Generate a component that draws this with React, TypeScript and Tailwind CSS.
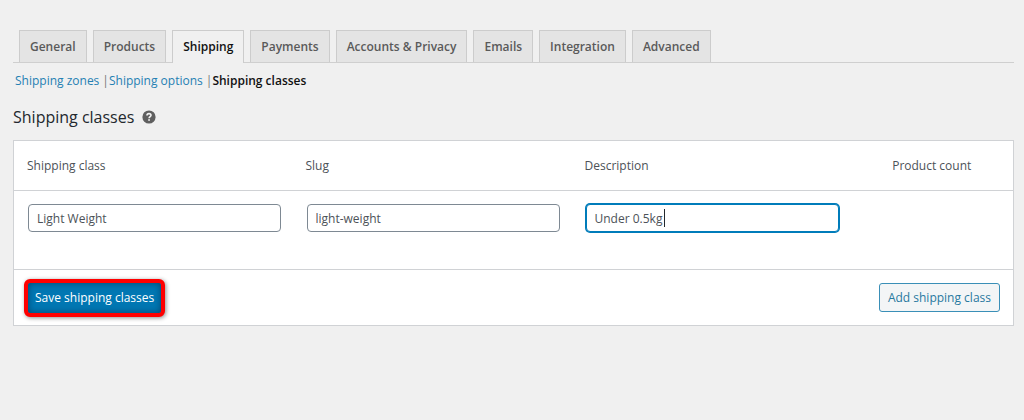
import React from "react";

const tabs = ["General", "Products", "Shipping", "Payments", "Accounts & Privacy", "Emails", "Integration", "Advanced"];

const tabBase = "block border border-b-0 px-[10px] pt-[6px] pb-[5px] text-[12px] leading-5 font-semibold whitespace-nowrap";
const inputBase = "block w-full rounded-[4px] bg-white px-2 text-[12px] text-[#4c5258] outline-none";

function HelpIcon() {
  return (
    <svg width="14" height="14" viewBox="0 0 14 14" role="img" aria-label="Help">
      <circle cx="7" cy="7" r="6.6" fill="#5f5f5f" />
      <path
        d="M5 5.5C5 4.3 5.8 3.6 7 3.6s2 .7 2 1.7c0 1.3-1.9 1.5-1.9 3"
        fill="none"
        stroke="#f1f1f1"
        strokeWidth="1.6"
      />
      <rect x="6.2" y="9.2" width="1.7" height="1.6" fill="#f1f1f1" />
    </svg>
  );
}

export default function App() {
  return (
    <div className="min-h-screen bg-[#f0f0f0] pt-[30px] pr-[10px] pb-8 pl-[13px] font-['Open_Sans','Noto_Sans',sans-serif] text-[#4c5258]">
      <nav aria-label="Settings" className="flex gap-[6px] border-b border-[#cfcfcf] pl-[6px]">
        {tabs.map((tab) => (
          <a
            key={tab}
            href="#"
            aria-current={tab === "Shipping" ? "page" : undefined}
            className={
              tab === "Shipping"
                ? `${tabBase} -mb-px border-[#cccccc] bg-[#f0f0f0] text-[#111111]`
                : `${tabBase} border-[#cccccc] bg-[#e4e4e4] text-[#5a5a5a]`
            }
          >
            {tab}
          </a>
        ))}
      </nav>

      <ul className="mt-2 flex pl-[2px] text-[12px] leading-5 text-[#777777]">
        <li>
          <a href="#" className="text-[#2580b3]">Shipping zones</a>
          <span className="ml-[3px]">|</span>
        </li>
        <li>
          <a href="#" className="text-[#2580b3]">Shipping options</a>
          <span className="ml-[3px]">|</span>
        </li>
        <li>
          <a href="#" aria-current="page" className="font-semibold text-[#111111]">Shipping classes</a>
        </li>
      </ul>

      <h2 className="mt-4 flex items-center gap-2 text-[16px] leading-5 font-medium text-[#23282d]">
        Shipping classes
        <HelpIcon />
      </h2>

      <form className="mt-[13px]" onSubmit={(e) => e.preventDefault()}>
        <table className="w-full table-fixed border border-[#d0d2d5] bg-white text-[12px]">
          <thead>
            <tr className="h-[50px] border-b border-[#d0d2d5] text-left">
              <th scope="col" className="w-[27.9%] px-[13px] font-normal">Shipping class</th>
              <th scope="col" className="w-[27.9%] px-[13px] font-normal">Slug</th>
              <th scope="col" className="w-[27.9%] px-[13px] font-normal">Description</th>
              <th scope="col" className="text-center font-normal">Product count</th>
            </tr>
          </thead>
          <tbody>
            <tr className="h-[79px] align-top">
              <td className="pt-[13px] pr-[12px] pl-[14px]">
                <input aria-label="Shipping class" defaultValue="Light Weight" className={`${inputBase} h-7 border border-[#7e8993]`} />
              </td>
              <td className="pt-[13px] pr-[12px] pl-[14px]">
                <input aria-label="Slug" defaultValue="light-weight" className={`${inputBase} h-7 border border-[#7e8993]`} />
              </td>
              <td className="pt-[13px] pr-[12px] pl-[14px]">
                <div className="relative">
                  <input
                    aria-label="Description"
                    defaultValue="Under 0.5kg"
                    className={`${inputBase} h-7 border border-[#007cba] caret-transparent ring-1 ring-[#007cba]`}
                  />
                  <span aria-hidden="true" className="absolute top-[5px] left-[78px] h-[18px] w-px bg-[#23282d]" />
                </div>
              </td>
              <td />
            </tr>
          </tbody>
          <tfoot>
            <tr className="h-[56px] border-t border-[#d0d2d5]">
              <td colSpan={4} className="pr-[13px] pl-[10px]">
                <div className="flex items-center justify-between">
                  <button
                    type="submit"
                    className="h-[38px] rounded-[6px] border-4 border-[#ff0000] bg-[#0077b3] px-[7px] text-[12px] whitespace-nowrap text-white shadow-[inset_0_0_7px_rgba(0,30,55,0.55),1px_1px_4px_rgba(0,0,0,0.45)]"
                  >
                    Save shipping classes
                  </button>
                  <button
                    type="button"
                    className="h-[29px] rounded-[3px] border border-[#3a8fb7] bg-[#f3f5f6] px-2 text-[12px] whitespace-nowrap text-[#2879a0]"
                  >
                    Add shipping class
                  </button>
                </div>
              </td>
            </tr>
          </tfoot>
        </table>
      </form>
    </div>
  );
}
